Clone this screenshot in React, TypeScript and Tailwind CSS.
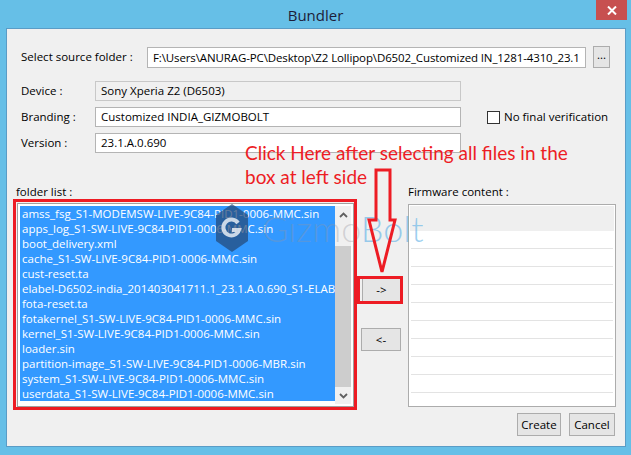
const files = [
  "amss_fsg_S1-MODEMSW-LIVE-9C84-PID1-0006-MMC.sin",
  "apps_log_S1-SW-LIVE-9C84-PID1-0006-MMC.sin",
  "boot_delivery.xml",
  "cache_S1-SW-LIVE-9C84-PID1-0006-MMC.sin",
  "cust-reset.ta",
  "elabel-D6502-india_201403041711.1_23.1.A.0.690_S1-ELABEL-LIVE-9C84-PID1-0006-MMC.sin",
  "fota-reset.ta",
  "fotakernel_S1-SW-LIVE-9C84-PID1-0006-MMC.sin",
  "kernel_S1-SW-LIVE-9C84-PID1-0006-MMC.sin",
  "loader.sin",
  "partition-image_S1-SW-LIVE-9C84-PID1-0006-MBR.sin",
  "system_S1-SW-LIVE-9C84-PID1-0006-MMC.sin",
  "userdata_S1-SW-LIVE-9C84-PID1-0006-MMC.sin",
];

function Field({ label, value, labelW, disabled }: { label: string; value: string; labelW: string; disabled?: boolean }) {
  return (
    <div className="flex items-center h-[20px]">
      <div className={`${labelW} pl-[14px] shrink-0`}>{label}</div>
      <div
        className={`w-[366px] h-[20px] border px-[5px] leading-[18px] whitespace-nowrap overflow-hidden ${
          disabled ? "bg-[#f0f0f0] border-[#c8c8c8]" : "bg-white border-[#b4b4b4]"
        }`}
      >
        {value}
      </div>
    </div>
  );
}

function Btn({ children, className }: { children: React.ReactNode; className: string }) {
  return (
    <div className={`flex items-center justify-center border border-[#acacac] bg-[#e5e5e5] ${className}`}>
      {children}
    </div>
  );
}

export default function App() {
  return (
    <div className="w-[631px] h-[455px] bg-[#66bfe7] flex flex-col font-['Open_Sans',sans-serif] text-[11.5px] text-black overflow-hidden">
      {/* title bar */}
      <div className="h-[28px] relative flex justify-center shrink-0">
        <div className="pt-[4px] text-[15px] text-[#1d1d3a]">Bundler</div>
        <div className="absolute right-[4px] top-0 w-[31px] h-[20px] bg-[#c75050] flex items-center justify-center">
          <svg width="10" height="9" viewBox="0 0 10 9">
            <path d="M1 0.5 L9 8.5 M9 0.5 L1 8.5" stroke="white" strokeWidth="2" />
          </svg>
        </div>
      </div>

      {/* client area */}
      <div className="ml-[6px] w-[620px] h-[419px] border border-[#5a9cc6] bg-[#f0f0f0] relative">
        {/* source folder */}
        <div className="mt-[17px] flex items-center h-[22px]">
          <div className="w-[140px] pl-[14px] shrink-0">Select source folder :</div>
          <div className="w-[439px] h-[21px] bg-white border border-[#b4b4b4] px-[5px] leading-[19px] tracking-[-0.12px] whitespace-nowrap overflow-hidden">
            F:\Users\ANURAG-PC\Desktop\Z2 Lollipop\D6502_Customized IN_1281-4310_23.1
          </div>
          <Btn className="ml-[7px] w-[17px] h-[22px] leading-none pb-[4px]">...</Btn>
        </div>

        <div className="mt-[13px] flex flex-col gap-[6px]">
          <Field label="Device :" value="Sony Xperia Z2 (D6503)" labelW="w-[88px]" disabled />
          <div className="flex items-center">
            <Field label="Branding :" value="Customized INDIA_GIZMOBOLT" labelW="w-[88px]" />
            <div className="ml-[26px] w-[13px] h-[13px] bg-white border border-[#333]" />
            <div className="ml-[4px]">No final verification</div>
          </div>
          <Field label="Version :" value="23.1.A.0.690" labelW="w-[88px]" />
        </div>

        {/* lists */}
        <div className="mt-[31px] flex items-start">
          <div className="ml-[9px] flex flex-col">
            <div className="h-[16px] leading-[16px]">folder list :</div>
            <div className="mt-[3px] ml-[1px] w-[337px] h-[204px] bg-white border border-[#a0a0a0] p-[2px] flex">
              <div className="flex-1 overflow-hidden">
                {files.map((f) => (
                  <div key={f} className="h-[15px] leading-[15px] bg-[#3399ff] text-white pl-[2px] whitespace-nowrap">
                    {f}
                  </div>
                ))}
              </div>
              <div className="w-[16px] flex flex-col bg-[#f0f0f0]">
                <div className="h-[17px] flex items-center justify-center">
                  <svg width="9" height="6" viewBox="0 0 9 6">
                    <path d="M1 5 L4.5 1.5 L8 5" stroke="#606060" strokeWidth="1.8" fill="none" />
                  </svg>
                </div>
                <div className="h-[23px]" />
                <div className="flex-1 bg-[#cdcdcd]" />
                <div className="h-[17px] flex items-center justify-center">
                  <svg width="9" height="6" viewBox="0 0 9 6">
                    <path d="M1 1 L4.5 4.5 L8 1" stroke="#606060" strokeWidth="1.8" fill="none" />
                  </svg>
                </div>
              </div>
            </div>
          </div>

          <div className="ml-[7px] w-[40px] flex flex-col">
            <Btn className="mt-[94px] ml-[1px] w-[39px] h-[24px]">-&gt;</Btn>
            <Btn className="mt-[26px] w-[40px] h-[23px]">&lt;-</Btn>
          </div>

          <div className="ml-[7px] flex flex-col">
            <div className="h-[16px] leading-[16px]">Firmware content :</div>
            <div className="mt-[4px] w-[208px] h-[203px] bg-white border border-[#acacac] p-[1px] flex flex-col">
              <div className="h-[25px] bg-[#efefef]" />
              <div className="px-[1px]">
                {Array.from({ length: 9 }).map((_, i) => (
                  <div key={i} className="h-[18px] border-b border-[#e3e3e3]" />
                ))}
              </div>
            </div>
            <div className="mt-[6px] flex justify-end gap-[8px] pr-[1px]">
              <Btn className="w-[44px] h-[23px]">Create</Btn>
              <Btn className="w-[46px] h-[23px]">Cancel</Btn>
            </div>
          </div>
        </div>

        {/* watermark */}
        <div className="absolute left-[208px] top-[174px] flex items-center pointer-events-none">
          <svg width="34" height="50" viewBox="0 0 34 50">
            <polygon points="17,1 33,12 33,38 17,49 1,38 1,12" fill="rgba(35,70,115,0.7)" />
            <path d="M23 20 A8 8 0 1 0 24 27 L17 27" stroke="rgba(255,255,255,0.75)" strokeWidth="4" fill="none" />
          </svg>
          <div className="ml-[13px] text-[36px] leading-none font-['Lato',sans-serif] font-light">
            <span className="text-[rgba(150,150,160,0.35)]">Gizmo</span>
            <span className="text-[rgba(90,175,230,0.6)]">Bolt</span>
          </div>
        </div>

        {/* annotation */}
        <div className="absolute left-[238px] top-[112px] text-[19px] leading-[24px] text-[#ed1c24] font-['Lato',sans-serif] pointer-events-none">
          Click Here after selecting all files in the
          <br />
          box at left side
        </div>
        <div className="absolute left-[6px] top-[170px] w-[344px] h-[211px] border-[3px] border-[#ed1c24] pointer-events-none" />
        <div className="absolute left-[350px] top-[247px] w-[46px] h-[28px] border-[3px] border-[#ed1c24] pointer-events-none" />
        <svg className="absolute left-[358px] top-[138px] pointer-events-none" width="34" height="110" viewBox="0 0 34 110">
          <polygon points="11,3 25,3 25,53 30,53 17,105 4,53 11,53" fill="none" stroke="#ed1c24" strokeWidth="3" />
        </svg>
      </div>
    </div>
  );
}
